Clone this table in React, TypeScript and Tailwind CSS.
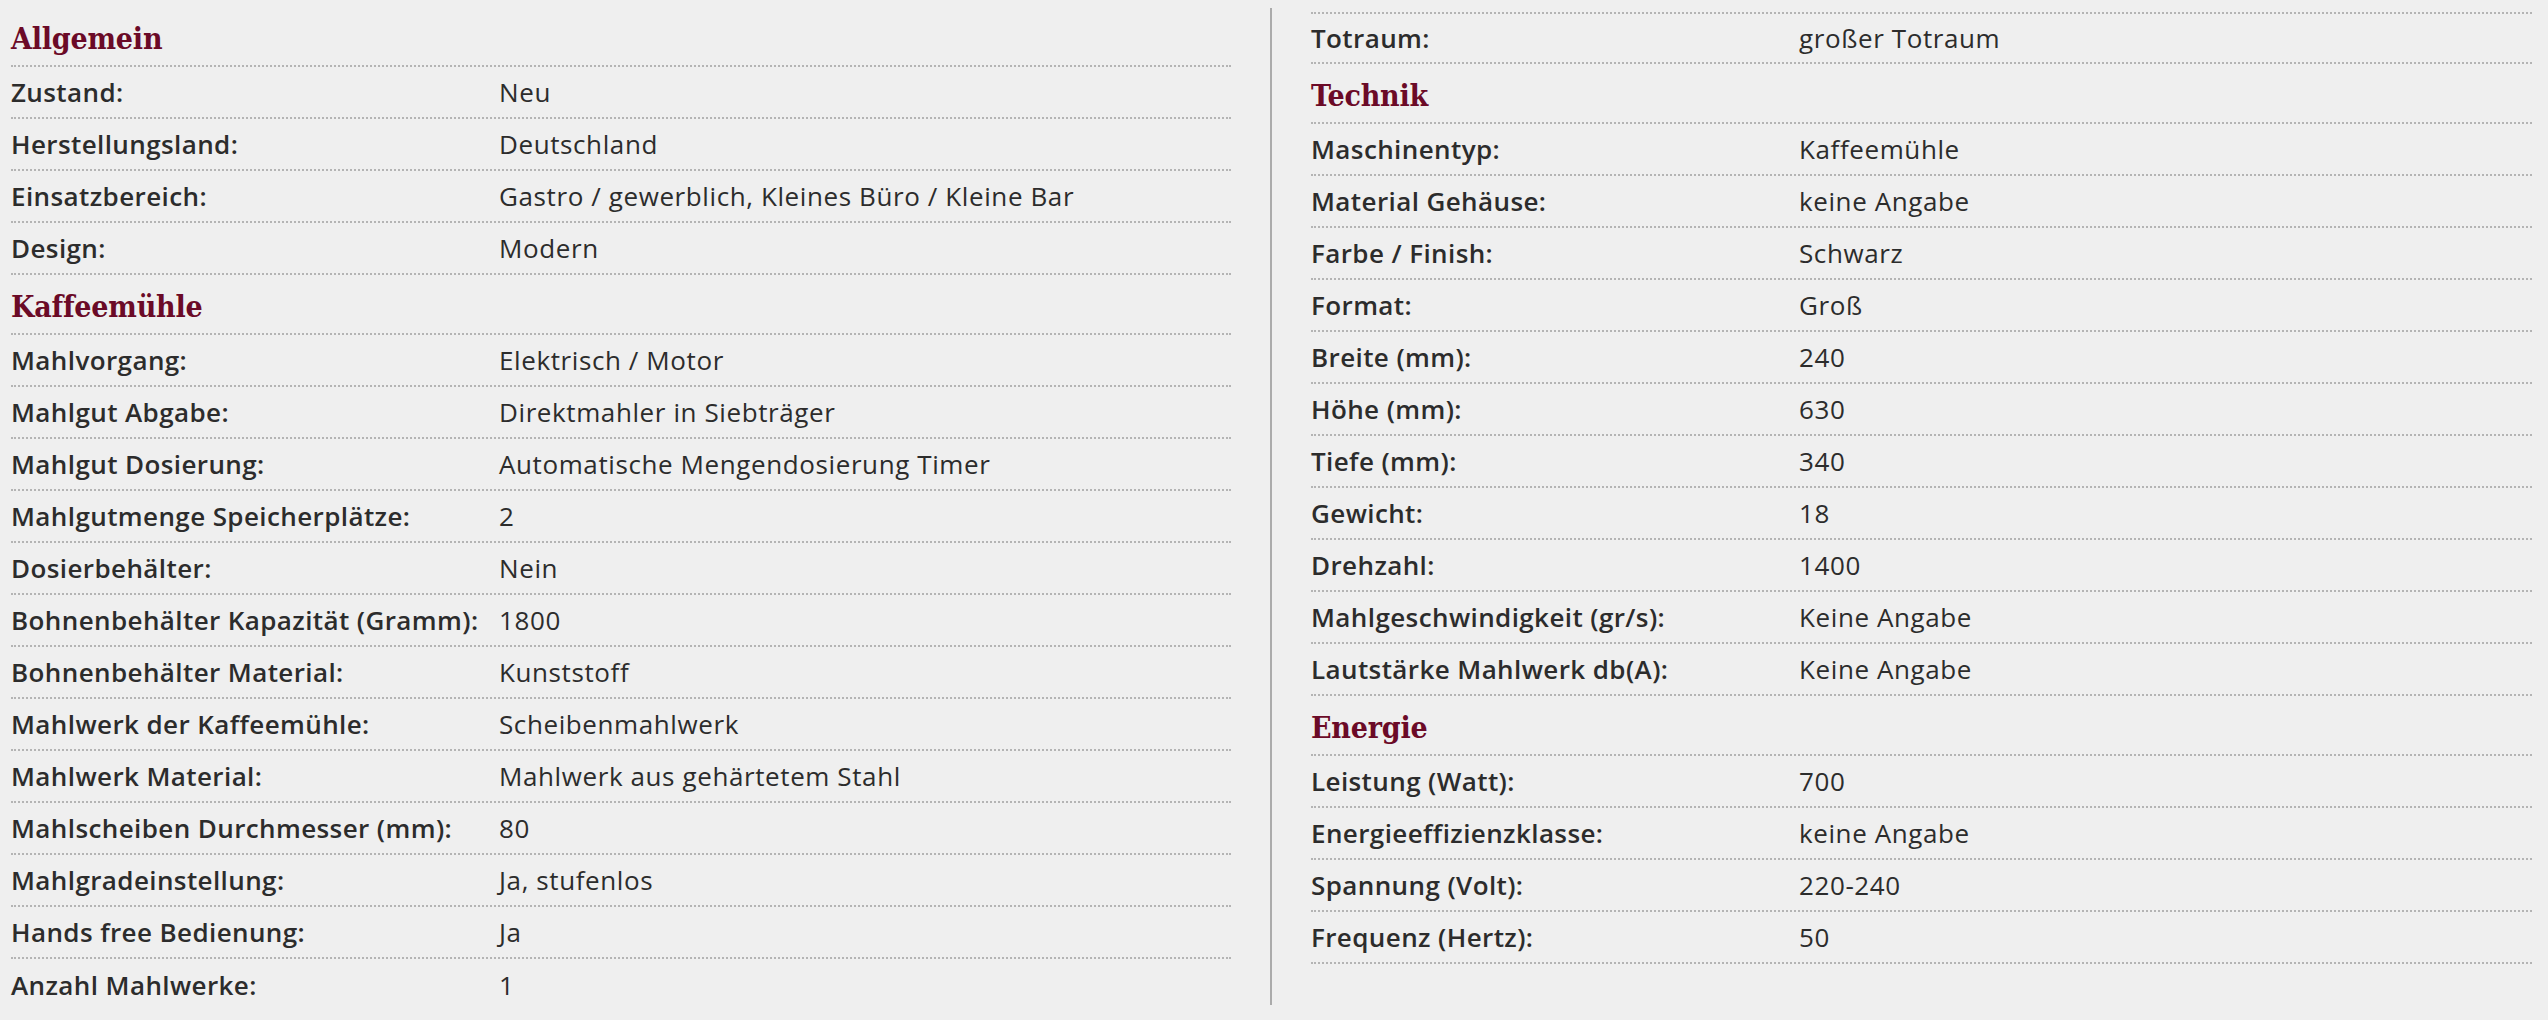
type Item = { h: string } | { k: string; v: string };

const leftItems: Item[] = [
  { h: "Allgemein" },
  { k: "Zustand:", v: "Neu" },
  { k: "Herstellungsland:", v: "Deutschland" },
  { k: "Einsatzbereich:", v: "Gastro / gewerblich, Kleines Büro / Kleine Bar" },
  { k: "Design:", v: "Modern" },
  { h: "Kaffeemühle" },
  { k: "Mahlvorgang:", v: "Elektrisch / Motor" },
  { k: "Mahlgut Abgabe:", v: "Direktmahler in Siebträger" },
  { k: "Mahlgut Dosierung:", v: "Automatische Mengendosierung Timer" },
  { k: "Mahlgutmenge Speicherplätze:", v: "2" },
  { k: "Dosierbehälter:", v: "Nein" },
  { k: "Bohnenbehälter Kapazität (Gramm):", v: "1800" },
  { k: "Bohnenbehälter Material:", v: "Kunststoff" },
  { k: "Mahlwerk der Kaffeemühle:", v: "Scheibenmahlwerk" },
  { k: "Mahlwerk Material:", v: "Mahlwerk aus gehärtetem Stahl" },
  { k: "Mahlscheiben Durchmesser (mm):", v: "80" },
  { k: "Mahlgradeinstellung:", v: "Ja, stufenlos" },
  { k: "Hands free Bedienung:", v: "Ja" },
  { k: "Anzahl Mahlwerke:", v: "1" },
];

const rightItems: Item[] = [
  { k: "Totraum:", v: "großer Totraum" },
  { h: "Technik" },
  { k: "Maschinentyp:", v: "Kaffeemühle" },
  { k: "Material Gehäuse:", v: "keine Angabe" },
  { k: "Farbe / Finish:", v: "Schwarz" },
  { k: "Format:", v: "Groß" },
  { k: "Breite (mm):", v: "240" },
  { k: "Höhe (mm):", v: "630" },
  { k: "Tiefe (mm):", v: "340" },
  { k: "Gewicht:", v: "18" },
  { k: "Drehzahl:", v: "1400" },
  { k: "Mahlgeschwindigkeit (gr/s):", v: "Keine Angabe" },
  { k: "Lautstärke Mahlwerk db(A):", v: "Keine Angabe" },
  { h: "Energie" },
  { k: "Leistung (Watt):", v: "700" },
  { k: "Energieeffizienzklasse:", v: "keine Angabe" },
  { k: "Spannung (Volt):", v: "220-240" },
  { k: "Frequenz (Hertz):", v: "50" },
];

// rows in a column; the left column's last row has no bottom rule
function Row({ item, first, last }: { item: Item; first?: boolean; last?: boolean }) {
  const border = first ? "border-t-2 border-b-2" : last ? "" : "border-b-2";
  if ("h" in item) {
    return (
      <div
        className={`flex h-[60px] items-center border-dotted border-[#b4b4b4] ${border}`}
      >
        <h3 className="pt-[5px] font-['DejaVu_Serif_Condensed','DejaVu_Serif',serif] text-[30px] font-bold tracking-[-0.2px] text-[#6b0a27]">
          {item.h}
        </h3>
      </div>
    );
  }
  return (
    <div
      className={`flex h-[52px] items-center border-dotted border-[#b4b4b4] text-[26px] text-[#2c2c2c] ${border}`}
    >
      <span className="w-[488px] shrink-0 font-semibold tracking-[0.4px]">{item.k}</span>
      <span className="font-normal tracking-[0.6px]">{item.v}</span>
    </div>
  );
}

export default function App() {
  return (
    <div className="flex h-[1020px] items-start bg-[#efefef] pl-[11px] pt-[7px] font-['Open_Sans',sans-serif]">
      <div className="w-[1220px] shrink-0">
        {leftItems.map((item, i) => (
          <Row key={i} item={item} last={i === leftItems.length - 1} />
        ))}
      </div>
      <div className="ml-[39px] mr-[39px] mt-[1px] h-[997px] w-[2px] shrink-0 bg-[#ababab]" />
      <div className="mt-[5px] w-[1221px] shrink-0">
        {rightItems.map((item, i) => (
          <Row key={i} item={item} first={i === 0} />
        ))}
      </div>
    </div>
  );
}
